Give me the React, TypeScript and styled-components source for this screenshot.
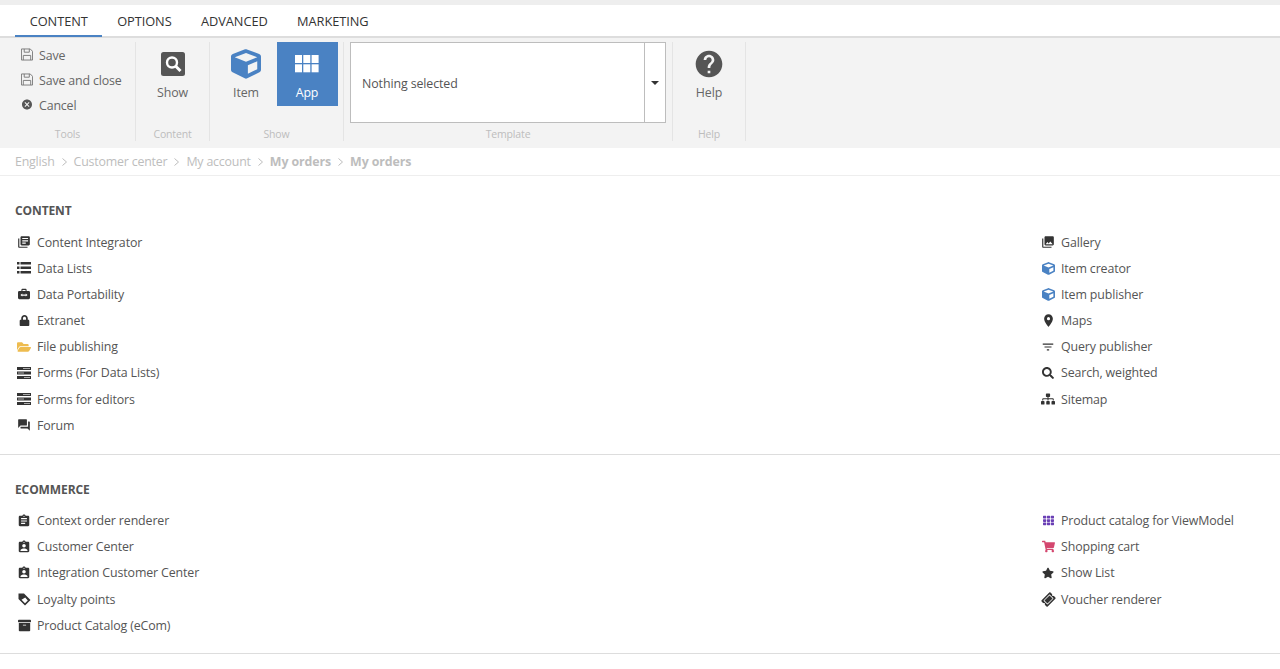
import { ReactNode } from "react";
import styled, { createGlobalStyle } from "styled-components";
import {
  MdLibraryBooks,
  MdForum,
  MdPhotoLibrary,
  MdPlace,
  MdFilterList,
  MdAssignment,
  MdAssignmentInd,
  MdCancel,
  MdHelp,
} from "react-icons/md";
import {
  FaArchive,
  FaCube,
  FaFolderOpen,
  FaLock,
  FaSearch,
  FaShoppingCart,
  FaSitemap,
  FaStar,
  FaTh,
  FaTicketAlt,
} from "react-icons/fa";

const GlobalStyle = createGlobalStyle`
  html, body {
    margin: 0;
    padding: 0;
    background: #fff;
    font-family: "Open Sans", "Noto Sans", sans-serif;
    color: #555;
    overflow: hidden;
  }
`;

const Page = styled.div`
  width: 1280px;
  height: 669px;
  overflow: hidden;
  border-top: 5px solid #eeeeee;
  box-sizing: border-box;
`;

const Tabs = styled.div`
  display: flex;
  height: 31px;
  padding-left: 15px;
  border-bottom: 2px solid #dddddd;
`;

const Tab = styled.div<{ $active?: boolean }>`
  height: 32px;
  box-sizing: border-box;
  padding: 0 14.7px;
  line-height: 33px;
  font-size: 12.8px;
  color: #333;
  letter-spacing: -0.06px;
  border-bottom: 2px solid ${(p) => (p.$active ? "#4a82c3" : "transparent")};
`;

const Ribbon = styled.div`
  display: flex;
  height: 110px;
  background: #f3f3f3;
  padding-top: 4px;
  box-sizing: border-box;
`;

const Group = styled.div<{ $width: number }>`
  width: ${(p) => p.$width}px;
  height: 99px;
  box-sizing: border-box;
  border-right: 1px solid #e4e4e4;
  display: flex;
  flex-direction: column;
`;

const GroupBody = styled.div`
  height: 83px;
  display: flex;
  justify-content: center;
`;

const GroupLabel = styled.div`
  height: 16px;
  line-height: 18px;
  font-size: 10.5px;
  letter-spacing: -0.15px;
  text-align: center;
  color: #bdbdbd;
`;

const SmallList = styled.div`
  display: flex;
  flex-direction: column;
  width: 100%;
  padding: 1.6px 0 0 21px;
  box-sizing: border-box;
`;

const SmallButton = styled.div`
  display: flex;
  align-items: center;
  gap: 6px;
  height: 24.7px;
  font-size: 12.4px;
  letter-spacing: -0.15px;
  color: #666;
  white-space: nowrap;
`;

const SmallIcon = styled.span`
  width: 12px;
  height: 14px;
  display: flex;
  align-items: center;
  justify-content: center;
  margin-top: -2px;
`;

const LargeButton = styled.div<{ $active?: boolean }>`
  width: 61px;
  height: 64px;
  display: flex;
  flex-direction: column;
  align-items: center;
  padding-top: 7px;
  box-sizing: border-box;
  font-size: 12.4px;
  letter-spacing: -0.1px;
  background: ${(p) => (p.$active ? "#4a82c3" : "transparent")};
  color: ${(p) => (p.$active ? "#fff" : "#666")};
`;

const LargeIcon = styled.div`
  height: 30px;
  display: flex;
  align-items: center;
  justify-content: center;
  margin-bottom: 5px;
`;

const Select = styled.div`
  width: 316px;
  height: 81px;
  box-sizing: border-box;
  border: 1px solid #bdbdbd;
  background: #fff;
  display: flex;
`;

const SelectText = styled.div`
  flex: 1;
  padding-left: 11px;
  line-height: 81px;
  font-size: 12.4px;
  letter-spacing: -0.1px;
  color: #555;
`;

const SelectCaret = styled.div`
  width: 20px;
  border-left: 1px solid #bdbdbd;
  display: flex;
  align-items: center;
  justify-content: center;
`;

const Caret = styled.span`
  width: 0;
  height: 0;
  border-left: 4px solid transparent;
  border-right: 4px solid transparent;
  border-top: 4px solid #333;
`;

const Breadcrumb = styled.div`
  display: flex;
  align-items: center;
  height: 27px;
  padding-left: 15px;
  border-bottom: 1px solid #eeeeee;
  font-size: 12.4px;
  color: #bdbdbd;
`;

const Crumb = styled.span<{ $bold?: boolean }>`
  font-weight: ${(p) => (p.$bold ? 700 : 400)};
  letter-spacing: ${(p) => (p.$bold ? "-0.1px" : "-0.2px")};
`;

const CrumbSep = styled.svg`
  margin: 0 7px;
`;

const Section = styled.section<{ $height: number }>`
  height: ${(p) => p.$height}px;
  box-sizing: border-box;
  padding: 27px 15px 0;
  border-bottom: 1px solid #dddddd;
`;

const SectionTitle = styled.h2`
  margin: 0 0 10.1px;
  height: 16px;
  line-height: 16px;
  font-size: 12px;
  font-weight: 700;
  letter-spacing: -0.1px;
  color: #555;
`;

const Columns = styled.div`
  display: grid;
  grid-template-columns: 1024px 1fr;
`;

const Column = styled.div`
  display: flex;
  flex-direction: column;
`;

const Item = styled.div`
  display: flex;
  align-items: center;
  height: 26.15px;
  font-size: 12.4px;
  letter-spacing: -0.13px;
  color: #555;
  white-space: nowrap;
`;

const ItemIcon = styled.span<{ $color?: string }>`
  width: 18px;
  margin-right: 4px;
  display: flex;
  justify-content: center;
  color: ${(p) => p.$color ?? "#333"};
`;

function ShowIcon() {
  return (
    <svg width="24" height="24" viewBox="0 0 24 24">
      <rect width="24" height="24" rx="2.5" fill="#555" />
      <circle cx="11" cy="10.5" r="5" fill="none" stroke="#fff" strokeWidth="2.4" />
      <path d="m14.5 14 5 5" stroke="#fff" strokeWidth="3" />
    </svg>
  );
}

function AppGrid() {
  const cells = [0, 1, 2].flatMap((x) => [0, 1].map((y) => [x, y]));
  return (
    <svg width="24" height="18" viewBox="0 0 24 18">
      {cells.map(([x, y]) => (
        <rect key={`${x}-${y}`} x={x * 8.3} y={y * 9.3} width="7" height="8" fill="#fff" />
      ))}
    </svg>
  );
}

function Floppy() {
  return (
    <svg width="13" height="13" viewBox="0 0 13 13" fill="none" stroke="#777">
      <path d="M.5.5h9.5l2.500 2.500v9.500H.5z" />
      <path d="M3.5.5v3.500h5.500V.5M2.500 12.500V7.500h8v5" />
    </svg>
  );
}

function ListIcon() {
  return (
    <svg width="14" height="12" viewBox="0 0 14 12" fill="#333">
      <path d="M0 0h2.500v2.500H0zM3.500 0H14v2.500H3.500zM0 4.500h2.500V7H0zM3.500 4.500H14V7H3.500zM0 9h2.500v2.500H0zM3.500 9H14v2.500H3.500z" />
    </svg>
  );
}

function FormsIcon() {
  return (
    <svg width="14" height="12" viewBox="0 0 14 12">
      <path fill="#333" d="M0 0h14v3H0zM0 4.500h14v3H0zM0 9h14v3H0z" />
      <path fill="#aaa" d="M6 1h7v1H6zM1 5.500h6v1H1zM7 10h6v1H7z" />
    </svg>
  );
}

function PortabilityIcon() {
  return (
    <svg width="12" height="12" viewBox="0 0 14 14">
      <path
        fill="#333"
        fillRule="evenodd"
        d="M5 1h4a1 1 0 0 1 1 1v1.500h2.500A1.500 1.500 0 0 1 14 5v6.500a1.500 1.500 0 0 1-1.500 1.500h-11A1.500 1.500 0 0 1 0 11.500V5a1.500 1.500 0 0 1 1.500-1.500H4V2a1 1 0 0 1 1-1zm.200 1.300v1.200h3.600V2.300H5.200zM5 6.500 2.800 8.300 5 10V8.900h4V10l2.200-1.700L9 6.500v1.200H5V6.500z"
      />
    </svg>
  );
}

function LoyaltyIcon() {
  return (
    <svg width="13" height="13" viewBox="0 0 13 13">
      <path
        fill="#333"
        fillRule="evenodd"
        d="M.5.5h5.500l6.500 6.500-5.500 5.500L.5 6V.5zM7.200 4.500 3.500 6.800 7 10.300l2.800-2.800-2.600-3z"
      />
    </svg>
  );
}

type Entry = { label: string; icon: ReactNode; color?: string };

const contentLeft: Entry[] = [
  { label: "Content Integrator", icon: <MdLibraryBooks size={14} /> },
  { label: "Data Lists", icon: <ListIcon /> },
  { label: "Data Portability", icon: <PortabilityIcon /> },
  { label: "Extranet", icon: <FaLock size={11} /> },
  { label: "File publishing", icon: <FaFolderOpen size={14} />, color: "#eebc4f" },
  { label: "Forms (For Data Lists)", icon: <FormsIcon /> },
  { label: "Forms for editors", icon: <FormsIcon /> },
  { label: "Forum", icon: <MdForum size={14} /> },
];

const contentRight: Entry[] = [
  { label: "Gallery", icon: <MdPhotoLibrary size={14} /> },
  { label: "Item creator", icon: <FaCube size={13} />, color: "#4a82c3" },
  { label: "Item publisher", icon: <FaCube size={13} />, color: "#4a82c3" },
  { label: "Maps", icon: <MdPlace size={15} /> },
  { label: "Query publisher", icon: <MdFilterList size={14} /> },
  { label: "Search, weighted", icon: <FaSearch size={12} /> },
  { label: "Sitemap", icon: <FaSitemap size={14} /> },
];

const ecomLeft: Entry[] = [
  { label: "Context order renderer", icon: <MdAssignment size={14} /> },
  { label: "Customer Center", icon: <MdAssignmentInd size={14} /> },
  { label: "Integration Customer Center", icon: <MdAssignmentInd size={14} /> },
  { label: "Loyalty points", icon: <LoyaltyIcon /> },
  { label: "Product Catalog (eCom)", icon: <FaArchive size={13} /> },
];

const ecomRight: Entry[] = [
  { label: "Product catalog for ViewModel", icon: <FaTh size={11} />, color: "#6a3fb5" },
  { label: "Shopping cart", icon: <FaShoppingCart size={13} />, color: "#d4476f" },
  { label: "Show List", icon: <FaStar size={12} /> },
  {
    label: "Voucher renderer",
    icon: <FaTicketAlt size={13} style={{ transform: "rotate(-45deg)" }} />,
  },
];

function ItemColumn({ entries }: { entries: Entry[] }) {
  return (
    <Column>
      {entries.map((entry) => (
        <Item key={entry.label}>
          <ItemIcon $color={entry.color}>{entry.icon}</ItemIcon>
          {entry.label}
        </Item>
      ))}
    </Column>
  );
}

function Separator() {
  return (
    <CrumbSep width="5" height="8" viewBox="0 0 5 8">
      <path d="m.5.5 4 3.500-4 3.500" fill="none" stroke="#bdbdbd" />
    </CrumbSep>
  );
}

export default function App() {
  return (
    <Page>
      <GlobalStyle />
      <Tabs>
        <Tab $active>CONTENT</Tab>
        <Tab>OPTIONS</Tab>
        <Tab>ADVANCED</Tab>
        <Tab>MARKETING</Tab>
      </Tabs>
      <Ribbon>
        <Group $width={136}>
          <GroupBody>
            <SmallList>
              <SmallButton>
                <SmallIcon>
                  <Floppy />
                </SmallIcon>
                Save
              </SmallButton>
              <SmallButton>
                <SmallIcon>
                  <Floppy />
                </SmallIcon>
                Save and close
              </SmallButton>
              <SmallButton>
                <SmallIcon>
                  <MdCancel size={15} color="#555" />
                </SmallIcon>
                Cancel
              </SmallButton>
            </SmallList>
          </GroupBody>
          <GroupLabel>Tools</GroupLabel>
        </Group>
        <Group $width={74}>
          <GroupBody>
            <LargeButton>
              <LargeIcon>
                <ShowIcon />
              </LargeIcon>
              Show
            </LargeButton>
          </GroupBody>
          <GroupLabel>Content</GroupLabel>
        </Group>
        <Group $width={134}>
          <GroupBody>
            <LargeButton>
              <LargeIcon>
                <FaCube size={30} color="#4a82c3" />
              </LargeIcon>
              Item
            </LargeButton>
            <LargeButton $active>
              <LargeIcon>
                <AppGrid />
              </LargeIcon>
              App
            </LargeButton>
          </GroupBody>
          <GroupLabel>Show</GroupLabel>
        </Group>
        <Group $width={329}>
          <GroupBody>
            <Select>
              <SelectText>Nothing selected</SelectText>
              <SelectCaret>
                <Caret />
              </SelectCaret>
            </Select>
          </GroupBody>
          <GroupLabel>Template</GroupLabel>
        </Group>
        <Group $width={73}>
          <GroupBody>
            <LargeButton>
              <LargeIcon>
                <MdHelp size={32} color="#555" />
              </LargeIcon>
              Help
            </LargeButton>
          </GroupBody>
          <GroupLabel>Help</GroupLabel>
        </Group>
      </Ribbon>
      <Breadcrumb>
        <Crumb>English</Crumb>
        <Separator />
        <Crumb>Customer center</Crumb>
        <Separator />
        <Crumb>My account</Crumb>
        <Separator />
        <Crumb $bold>My orders</Crumb>
        <Separator />
        <Crumb $bold>My orders</Crumb>
      </Breadcrumb>
      <Section $height={278.5}>
        <SectionTitle>CONTENT</SectionTitle>
        <Columns>
          <ItemColumn entries={contentLeft} />
          <ItemColumn entries={contentRight} />
        </Columns>
      </Section>
      <Section $height={199.5}>
        <SectionTitle>ECOMMERCE</SectionTitle>
        <Columns>
          <ItemColumn entries={ecomLeft} />
          <ItemColumn entries={ecomRight} />
        </Columns>
      </Section>
    </Page>
  );
}
